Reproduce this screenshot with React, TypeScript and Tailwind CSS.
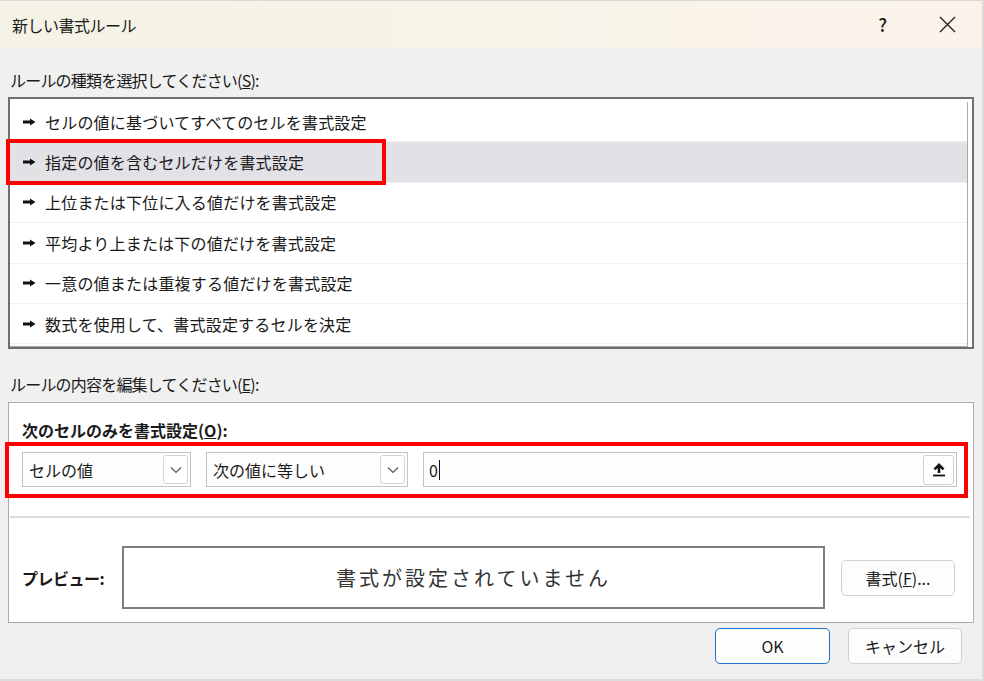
import React from 'react';

const rules = [
  'セルの値に基づいてすべてのセルを書式設定',
  '指定の値を含むセルだけを書式設定',
  '上位または下位に入る値だけを書式設定',
  '平均より上または下の値だけを書式設定',
  '一意の値または重複する値だけを書式設定',
  '数式を使用して、書式設定するセルを決定',
];

function Bullet() {
  return (
    <svg width="13" height="8" viewBox="0 0 13 8" className="flex-shrink-0">
      <polygon points="0,2.6 7,2.6 7,0.5 12.5,4 7,7.5 7,5.4 0,5.4" fill="#111" />
    </svg>
  );
}

function Chevron() {
  return (
    <svg width="12" height="8" viewBox="0 0 12 8">
      <polyline points="1,1.5 6,6.5 11,1.5" fill="none" stroke="#555" strokeWidth="1.2" />
    </svg>
  );
}

function Combo({ label, width }: { label: string; width: string }) {
  return (
    <div className={`${width} h-[35px] flex items-center justify-between border border-[#c4c4c4] bg-[#fdfdfd] pl-[6px] pr-[2px]`}>
      <span className="text-[16px] text-[#1a1a1a]">{label}</span>
      <div className="w-[25px] h-[29px] border border-[#d6d6d6] rounded-[3px] bg-white flex items-center justify-center">
        <Chevron />
      </div>
    </div>
  );
}

export default function App() {
  const font = { fontFamily: '"Noto Sans CJK JP", "Noto Sans", sans-serif' };
  return (
    <div
      className="relative w-[984px] h-[681px] overflow-hidden bg-[#f0f0f0] text-[#1a1a1a] flex flex-col"
      style={font}
    >
      {/* Title bar */}
      <div className="h-[48px] flex items-center justify-between bg-gradient-to-r from-[#f4f3e5] to-[#fbf3ea] pl-[12px] pr-[28px] flex-shrink-0 border-t border-[#d9d9d9]">
        <span className="text-[16px] tracking-[-0.5px] text-[#1a1a1a]">新しい書式ルール</span>
        <div className="flex items-center gap-[52px]">
          <span className="text-[18px] font-medium">?</span>
          <svg width="17" height="17" viewBox="0 0 17 17">
            <path d="M1 1 L16 16 M16 1 L1 16" stroke="#222" strokeWidth="1.4" />
          </svg>
        </div>
      </div>

      {/* Rule type */}
      <div className="mt-[20px] ml-[10px] h-[24px] leading-[24px] text-[16px] tracking-[-0.8px]">
        ルールの種類を選択してください(<span className="underline">S</span>):
      </div>
      <div className="mt-[5px] ml-[8px] w-[966px] h-[252px] border-2 border-[#6f6f6f] bg-white pt-[3px] pr-[4px]">
        <div className="border border-[#a8a8a8] border-l-0 border-t-0 h-full w-full">
          {rules.map((r, i) => (
            <div
              key={r}
              className={`h-[40.4px] flex items-center gap-[9px] pl-[13px] border-b border-[#f0f0f0] ${i === 1 ? 'bg-[#e1e1e6]' : ''}`}
            >
              <Bullet />
              <span className="text-[16px] tracking-[0.2px]">{r}</span>
            </div>
          ))}
        </div>
      </div>

      {/* Rule description */}
      <div className="mt-[23px] ml-[10px] h-[24px] leading-[24px] text-[16px] tracking-[-0.8px]">
        ルールの内容を編集してください(<span className="underline">E</span>):
      </div>
      <div className="mt-[6px] ml-[8px] w-[966px] h-[221px] border border-[#ababab] bg-white flex flex-col">
        <div className="mt-[15px] ml-[13px] h-[24px] leading-[24px] text-[16px] font-bold">
          次のセルのみを書式設定(<span className="underline">O</span>):
        </div>
        <div className="mt-[10px] ml-[13px] flex items-center">
          <Combo label="セルの値" width="w-[169px]" />
          <div className="w-[15px]" />
          <Combo label="次の値に等しい" width="w-[202px]" />
          <div className="w-[15px]" />
          <div className="w-[534px] h-[35px] flex items-center justify-between border border-[#c4c4c4] bg-[#fdfdfd] pl-[5px] pr-[2px]">
            <span className="text-[16px] flex items-center">
              0<span className="inline-block w-[1.5px] h-[20px] bg-[#111] ml-[1px]" />
            </span>
            <div className="w-[31px] h-[30px] border border-[#cfcfcf] rounded-[3px] bg-white flex items-center justify-center">
              <svg width="14" height="15" viewBox="0 0 14 15">
                <path d="M7 1 L1.5 6.5 L3.3 8.3 L5.7 5.9 L5.7 11 L8.3 11 L8.3 5.9 L10.7 8.3 L12.5 6.5 Z" fill="#111" />
                <rect x="1" y="12.6" width="12" height="1.8" fill="#111" />
              </svg>
            </div>
          </div>
        </div>
        <div className="mt-[29px] ml-[1px] w-[960px] h-[2px] bg-[#dcdcdc]" />
        <div className="mt-[28px] ml-[13px] flex items-center">
          <div className="w-[100px] text-[16px] font-bold tracking-[-0.5px]">プレビュー:</div>
          <div className="w-[703px] h-[63px] border-2 border-[#7e7e7e] flex items-center justify-center">
            <span className="text-[20px] tracking-[3px] text-[#333]">書式が設定されていません</span>
          </div>
          <div className="w-[16px]" />
          <div className="w-[114px] h-[36px] rounded-[5px] border border-[#d0d0d0] bg-[#fdfdfd] flex items-center justify-center text-[16px]">
            書式(<span className="underline">F</span>)...
          </div>
        </div>
      </div>

      {/* Footer buttons */}
      <div className="mt-[5px] flex justify-end pr-[22px] gap-[18px]">
        <div className="w-[115px] h-[36px] rounded-[5px] border-[1.5px] border-[#1a73c6] bg-[#fdfdfd] flex items-center justify-center text-[16px]">
          OK
        </div>
        <div className="w-[114px] h-[36px] rounded-[5px] border border-[#d0d0d0] bg-[#fdfdfd] flex items-center justify-center text-[16px]">
          キャンセル
        </div>
      </div>

      {/* Red annotation boxes */}
      <div className="absolute left-[6px] top-[139px] w-[380px] h-[46px] border-4 border-[#ff0000] pointer-events-none" />
      <div className="absolute left-[5px] top-[442px] w-[963px] h-[56px] border-4 border-[#ff0000] pointer-events-none" />

      {/* window edges */}
      <div className="absolute right-0 top-0 w-[2px] h-full bg-[#dcdcdc]" />
      <div className="absolute left-0 bottom-0 w-full h-[2px] bg-[#dcdcdc]" />
    </div>
  );
}
